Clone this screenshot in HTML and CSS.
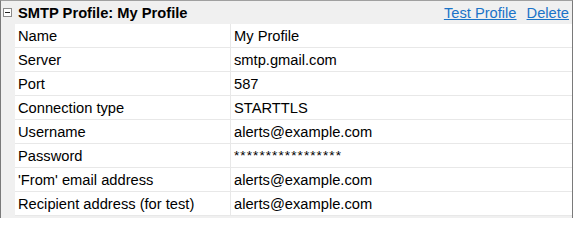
FILE: index.html
```html
<!DOCTYPE html>
<html>
<head>
<meta charset="utf-8">
<link rel="stylesheet" href="styles.css">
</head>
<body>
<div class="panel">
  <div class="header">
    <span class="toggle"><span class="minus"></span></span>
    <span class="title">SMTP Profile: My Profile</span>
    <span class="links"><a href="#">Test Profile</a><a href="#">Delete</a></span>
  </div>
  <div class="body">
    <div class="row"><div class="label">Name</div><div class="value">My Profile</div></div>
    <div class="row"><div class="label">Server</div><div class="value">smtp.gmail.com</div></div>
    <div class="row"><div class="label">Port</div><div class="value">587</div></div>
    <div class="row"><div class="label">Connection type</div><div class="value">STARTTLS</div></div>
    <div class="row"><div class="label">Username</div><div class="value">alerts@example.com</div></div>
    <div class="row"><div class="label">Password</div><div class="value mask">*****************</div></div>
    <div class="row"><div class="label">'From' email address</div><div class="value">alerts@example.com</div></div>
    <div class="row"><div class="label">Recipient address (for test)</div><div class="value">alerts@example.com</div></div>
  </div>
</div>
</body>
</html>
```
FILE: styles.css
```css
html, body { margin: 0; padding: 0; background: #ffffff; }
body { font-family: "Liberation Sans", Arial, sans-serif; font-size: 14.7px; color: #000; }
.panel {
  width: 573px;
  height: 218px;
  box-sizing: border-box;
  border-top: 1px solid #a0a0a0;
  border-left: 1px solid #7a7a7a;
  border-right: 1px solid #7a7a7a;
  background: #f0f0f0;
  overflow: hidden;
}
.header {
  height: 23px;
  display: flex;
  align-items: center;
  background: #f0f0f0;
}
.toggle {
  width: 17px;
  height: 23px;
  display: flex;
  align-items: flex-start;
  padding-left: 2px;
  box-sizing: border-box;
}
.minus {
  width: 7px; height: 7px;
  margin-top: 7px;
  border: 1px solid #8a8a8a;
  background: #fff;
  position: relative;
}
.minus::after {
  content: "";
  position: absolute;
  left: 1px; top: 3px; width: 5px; height: 1px; background: #222;
}
.title { font-weight: bold; flex: 1; }
.links { display: flex; gap: 10px; padding-right: 3px; }
.links a { color: #1a73c8; text-decoration: underline; }
.body { margin-left: 14px; background: #fff; }
.row {
  display: grid;
  grid-template-columns: 216px 1fr;
  height: 23px;
  border-bottom: 1px solid #e8e8e8;
  align-items: stretch;
}
.label, .value {
  padding-left: 3px;
  padding-top: 1px;
  line-height: 22px;
}
.label { border-right: 1px solid #e8e8e8; }
.mask { letter-spacing: 1.1px; font-size: 13.5px; }
```
